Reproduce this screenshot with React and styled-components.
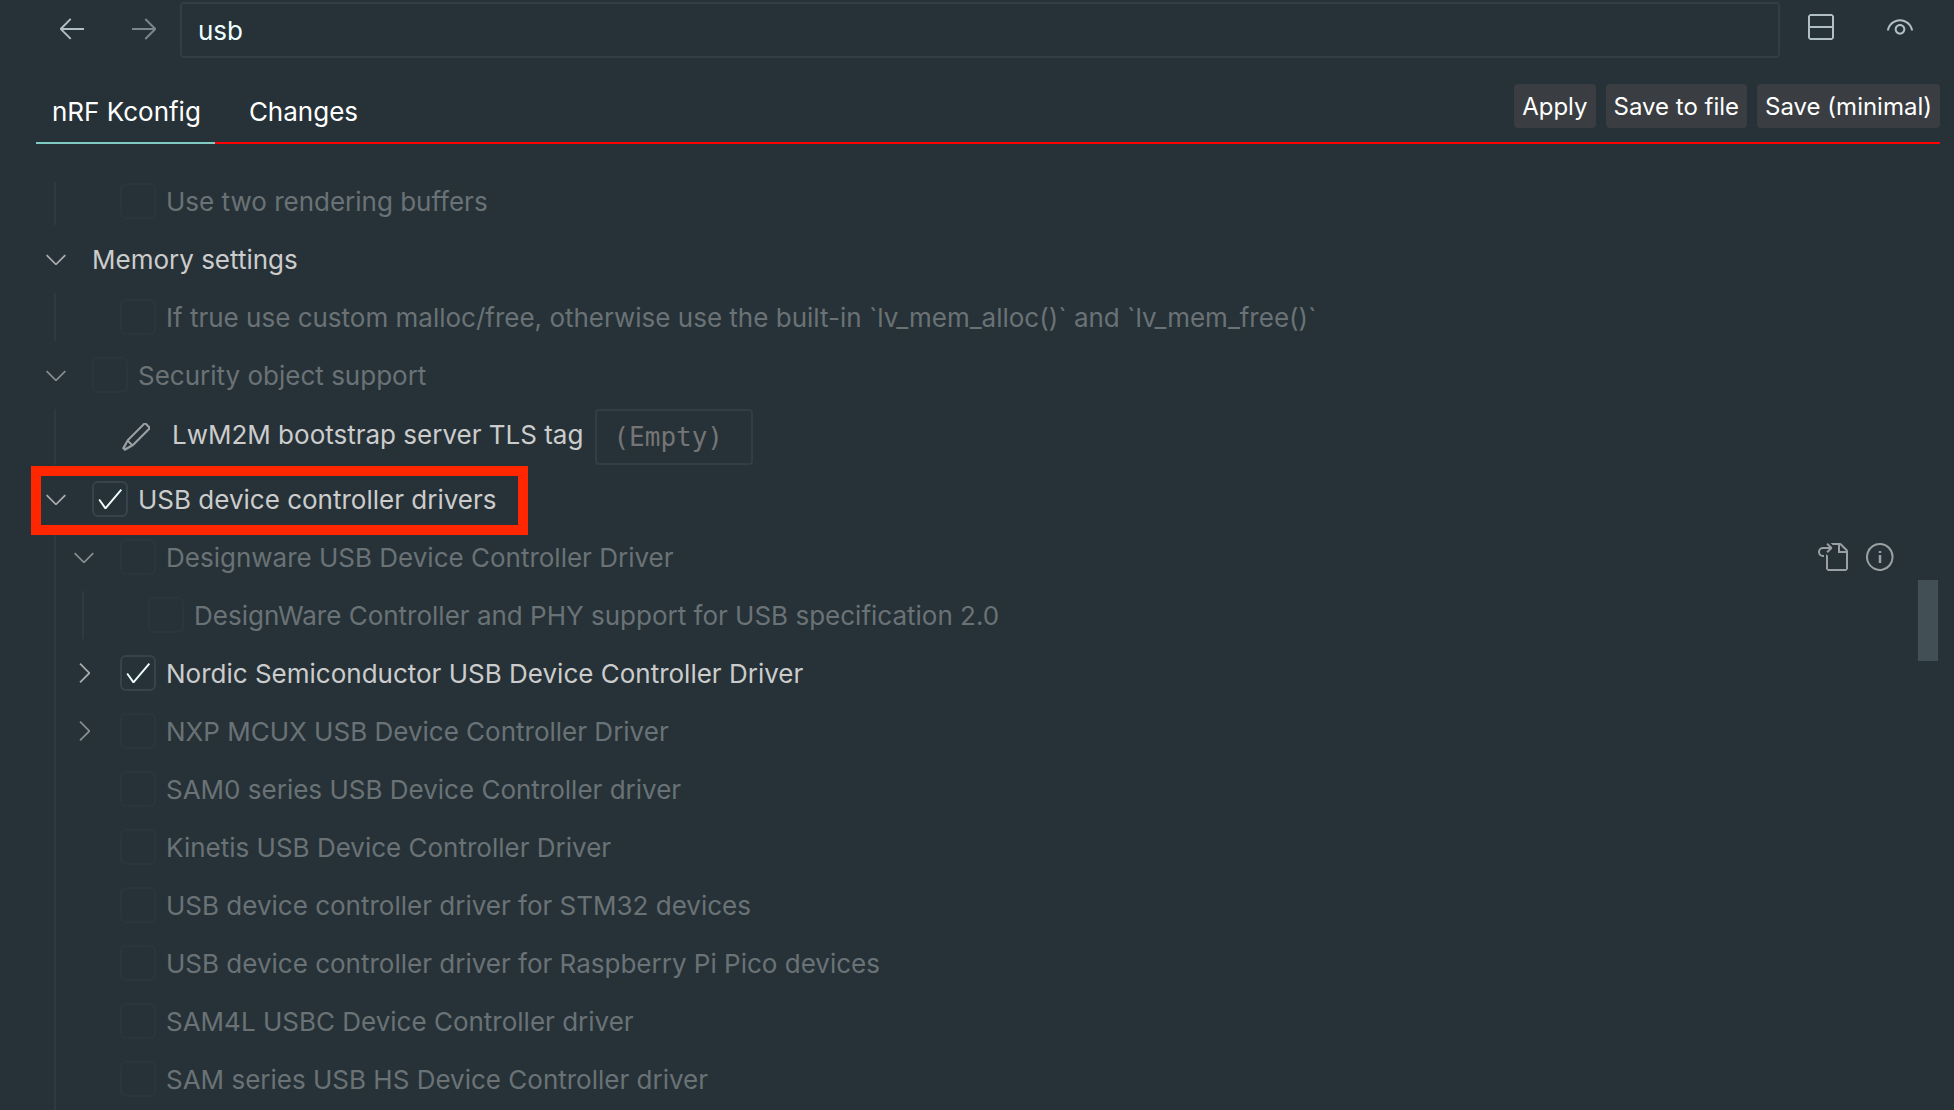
import React from "react";
import styled, { createGlobalStyle, css } from "styled-components";
import {
  VscArrowLeft,
  VscArrowRight,
  VscCheck,
  VscChevronDown,
  VscChevronRight,
  VscEdit,
  VscEye,
  VscGoToFile,
  VscInfo,
  VscSplitVertical,
} from "react-icons/vsc";

const GlobalStyle = createGlobalStyle`
  *, *::before, *::after { box-sizing: border-box; }
  body {
    margin: 0;
    background: #263238;
    color: #cccccc;
    font-family: Inter, "Liberation Sans", sans-serif;
    font-size: 26px;
    line-height: 32px;
  }
  button, input { font: inherit; color: inherit; }
`;

const Page = styled.div`
  display: flex;
  flex-direction: column;
  height: 100vh;
  overflow: hidden;
`;

const Toolbar = styled.header`
  display: flex;
  align-items: center;
  padding: 2px 14px 0 36px;
`;

const IconButton = styled.button`
  display: flex;
  justify-content: center;
  flex: none;
  width: ${(p) => p.$width}px;
  padding: 0;
  border: 0;
  background: none;
  color: #b0bec5;
  svg { display: block; width: 32px; height: 32px; }
  &:disabled { opacity: 0.6; }
`;

const ToolbarButton = styled(IconButton)`
  padding-bottom: 4px;
`;

const field = css`
  height: 56px;
  border: 2px solid #323e44;
  border-radius: 4px;
  background: transparent;
  outline: none;
  padding: 0 16px;
`;

const SearchInput = styled.input`
  ${field}
  flex: 1;
  min-width: 0;
  color: #eeffff;
`;

const TabBar = styled.div`
  display: flex;
  align-items: flex-end;
  justify-content: space-between;
  margin: 16px 14px 0 36px;
  height: 70px;
  box-shadow: inset 0 -2px 0 #ff0000;
`;

const Tabs = styled.nav`
  display: flex;
  gap: 18px;
  height: 100%;
`;

const Tab = styled.button`
  padding: 8px 14px 0 16px;
  border: 0;
  border-bottom: 2px solid ${(p) => (p.$active ? "#80cbc4" : "transparent")};
  background: none;
  color: #ffffff;
`;

const Actions = styled.div`
  display: flex;
  gap: 10px;
  padding-bottom: 16px;
`;

const ActionButton = styled.button`
  height: 44px;
  padding: 2px 8px 0;
  border: 0;
  border-radius: 4px;
  background: #3a3d41;
  color: #ffffff;
  font-size: 24px;
`;

const Viewport = styled.main`
  position: relative;
  flex: 1;
  min-height: 0;
  margin-top: 38px;
  overflow: hidden;
`;

const Tree = styled.ul`
  display: flex;
  flex-direction: column;
  gap: 10px;
  margin: -5px 0 0;
  padding: 0 58px 0 40px;
  list-style: none;
`;

const Branch = styled.ul`
  display: flex;
  flex-direction: column;
  gap: 10px;
  margin: ${(p) => (p.$first ? 0 : 10)}px 0 0 14px;
  padding: 0 0 ${(p) => (p.$open ? 58 : 0)}px 12px;
  border-left: 2px solid #2c3a43;
  list-style: none;
`;

const Row = styled.div`
  position: relative;
  display: flex;
  align-items: center;
  min-height: 48px;
`;

const Twisty = styled.button`
  display: flex;
  flex: none;
  width: 32px;
  height: 32px;
  margin-right: 20px;
  padding: 0;
  border: 0;
  background: none;
  color: #cccccc;
  opacity: ${(p) => (p.$dim ? 0.6 : 0.8)};
  visibility: ${(p) => (p.$hidden ? "hidden" : "visible")};
  svg { width: 32px; height: 32px; }
`;

const CheckCell = styled.span`
  display: grid;
  place-items: center;
  flex: none;
  margin-right: 10px;
  color: #eeffff;
  > * { grid-area: 1 / 1; }
  svg { width: 30px; height: 30px; pointer-events: none; }
`;

const Checkbox = styled.input`
  appearance: none;
  width: 36px;
  height: 36px;
  margin: 0;
  border: 2px solid #37434a;
  border-radius: 6px;
  &:disabled { opacity: 0.25; }
`;

const Label = styled.label`
  padding: ${(p) => (p.$raised ? "0 0 4px" : "2px 0 0")};
  white-space: nowrap;
  color: ${(p) => (p.$dim ? "#6b7276" : "#cccccc")};
`;

const PencilCell = styled.span`
  display: flex;
  width: 32px;
  margin-right: 20px;
  color: #9aa0a3;
  svg { width: 32px; height: 32px; }
`;

const ValueInput = styled.input`
  ${field}
  width: 158px;
  margin-left: 12px;
  font-family: "DejaVu Sans Mono", "Liberation Mono", monospace;
  &::placeholder { color: #757575; opacity: 1; }
`;

const RowActions = styled.span`
  display: flex;
  gap: 16px;
  margin-left: auto;
  button { color: #9aa0a3; }
`;

const Highlight = styled.span`
  position: absolute;
  top: -9px;
  left: -9px;
  width: 497px;
  height: 69px;
  border: 10px solid #ff2600;
  pointer-events: none;
`;

const Thumb = styled.div`
  position: absolute;
  top: 398px;
  right: 16px;
  width: 20px;
  height: 81px;
  background: #424f55;
`;

const tree = [
  { children: [{ label: "Use two rendering buffers", check: false }] },
  {
    label: "Memory settings",
    children: [
      {
        label:
          "If true use custom malloc/free, otherwise use the built-in `lv_mem_alloc()` and `lv_mem_free()`",
        check: false,
      },
    ],
  },
  {
    label: "Security object support",
    check: false,
    children: [{ label: "LwM2M bootstrap server TLS tag", text: true }],
  },
  {
    label: "USB device controller drivers",
    check: true,
    highlight: true,
    more: true,
    children: [
      {
        label: "Designware USB Device Controller Driver",
        check: false,
        actions: true,
        children: [
          { label: "DesignWare Controller and PHY support for USB specification 2.0", check: false },
        ],
      },
      { label: "Nordic Semiconductor USB Device Controller Driver", check: true, collapsed: true },
      { label: "NXP MCUX USB Device Controller Driver", check: false, collapsed: true },
      { label: "SAM0 series USB Device Controller driver", check: false },
      { label: "Kinetis USB Device Controller Driver", check: false },
      { label: "USB device controller driver for STM32 devices", check: false },
      { label: "USB device controller driver for Raspberry Pi Pico devices", check: false },
      { label: "SAM4L USBC Device Controller driver", check: false },
      { label: "SAM series USB HS Device Controller driver", check: false },
    ],
  },
];

function Node({ node, id }) {
  const dim = node.check === false;
  const parent = Boolean(node.children || node.collapsed);
  const plain = node.check === undefined && !node.text;
  return (
    <li>
      {node.label && (
        <Row>
          <Twisty $hidden={!parent} $dim={dim} aria-label={node.collapsed ? "Expand" : "Collapse"}>
            {node.collapsed ? <VscChevronRight /> : <VscChevronDown />}
          </Twisty>
          {node.check !== undefined && (
            <CheckCell>
              <Checkbox id={id} type="checkbox" defaultChecked={node.check} disabled={dim} />
              {node.check && <VscCheck />}
            </CheckCell>
          )}
          {node.text && (
            <PencilCell>
              <VscEdit />
            </PencilCell>
          )}
          <Label
            as={plain ? "span" : "label"}
            htmlFor={plain ? undefined : id}
            $dim={dim}
            $raised={node.text}
          >
            {node.label}
          </Label>
          {node.text && <ValueInput id={id} placeholder="(Empty)" />}
          {node.actions && (
            <RowActions>
              <IconButton $width={32} aria-label="Go to definition">
                <VscGoToFile />
              </IconButton>
              <IconButton $width={32} aria-label="Details">
                <VscInfo />
              </IconButton>
            </RowActions>
          )}
          {node.highlight && <Highlight />}
        </Row>
      )}
      {node.children && (
        <Branch $first={!node.label} $open={node.more}>
          {node.children.map((child, i) => (
            <Node key={i} node={child} id={`${id}-${i}`} />
          ))}
        </Branch>
      )}
    </li>
  );
}

export default function App() {
  return (
    <Page>
      <GlobalStyle />
      <Toolbar>
        <ToolbarButton $width={72} aria-label="Back">
          <VscArrowLeft />
        </ToolbarButton>
        <ToolbarButton $width={72} aria-label="Forward" disabled>
          <VscArrowRight />
        </ToolbarButton>
        <SearchInput aria-label="Search" defaultValue="usb" />
        <ToolbarButton $width={80} aria-label="Split view">
          <VscSplitVertical />
        </ToolbarButton>
        <ToolbarButton $width={80} aria-label="Show all">
          <VscEye />
        </ToolbarButton>
      </Toolbar>
      <TabBar>
        <Tabs>
          <Tab $active>nRF Kconfig</Tab>
          <Tab>Changes</Tab>
        </Tabs>
        <Actions>
          <ActionButton>Apply</ActionButton>
          <ActionButton>Save to file</ActionButton>
          <ActionButton>Save (minimal)</ActionButton>
        </Actions>
      </TabBar>
      <Viewport>
        <Tree>
          {tree.map((node, i) => (
            <Node key={i} node={node} id={`symbol-${i}`} />
          ))}
        </Tree>
        <Thumb />
      </Viewport>
    </Page>
  );
}
